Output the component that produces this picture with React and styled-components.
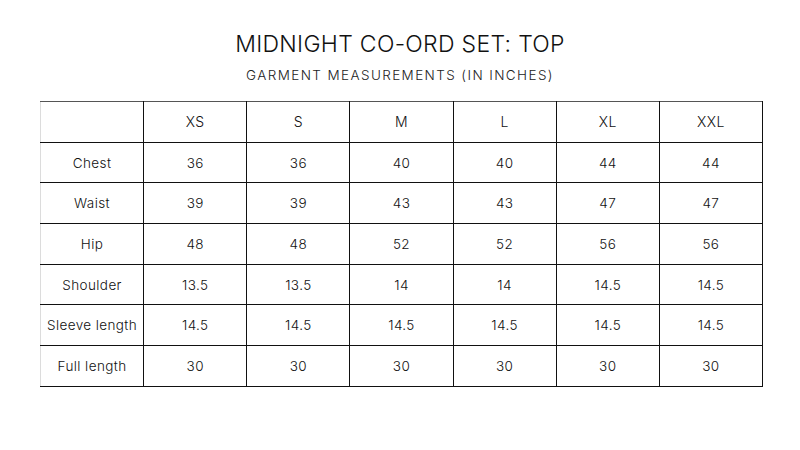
import React from 'react'
import styled, { createGlobalStyle } from 'styled-components'

const GlobalStyle = createGlobalStyle`
  body {
    margin: 0;
    background: #ffffff;
    font-family: Inter, "Liberation Sans", sans-serif;
    color: #111;
  }
`;

const Page = styled.div`
  width: 800px;
  height: 450px;
  padding-top: 30px;
  box-sizing: border-box;
`;

const Title = styled.h1`
  margin: 0;
  text-align: center;
  font-size: 23px;
  font-weight: 300;
  line-height: 28px;
  letter-spacing: 0.3px;
  color: #111;
`;

const Subtitle = styled.h2`
  margin: 8px 0 0;
  text-align: center;
  font-size: 13.5px;
  font-weight: 300;
  line-height: 18px;
  letter-spacing: 1.4px;
  color: #222;
`;

const Table = styled.table`
  margin: 17px 0 0 40px;
  width: 723px;
  border-collapse: collapse;
  table-layout: fixed;
`;

const Cell = styled.td`
  height: 39.7px;
  padding: 0;
  text-align: center;
  font-size: 13.5px;
  font-weight: 300;
  letter-spacing: 0.4px;
  color: #111;
  border: 1px solid #111;
  border-top-color: ${p => (p.$lightTop ? '#c8c8c8' : '#111')};
  border-left-color: ${p => (p.$edge ? '#dcdcdc' : p.$grayLeft ? '#9a9a9a' : '#111')};
`;

const HeadCell = styled(Cell)`
  font-size: 14px;
  border-top-color: #555;
`;

const sizes = ['XS', 'S', 'M', 'L', 'XL', 'XXL'];

const rows = [
  ['Chest', '36', '36', '40', '40', '44', '44'],
  ['Waist', '39', '39', '43', '43', '47', '47'],
  ['Hip', '48', '48', '52', '52', '56', '56'],
  ['Shoulder', '13.5', '13.5', '14', '14', '14.5', '14.5'],
  ['Sleeve length', '14.5', '14.5', '14.5', '14.5', '14.5', '14.5'],
  ['Full length', '30', '30', '30', '30', '30', '30'],
];

const App = () => {
  return (
    <Page>
      <GlobalStyle />
      <Title>MIDNIGHT CO-ORD SET: TOP</Title>
      <Subtitle>GARMENT MEASUREMENTS (IN INCHES)</Subtitle>
      <Table>
        <tbody>
          <tr>
            <HeadCell $edge />
            {sizes.map((s, i) => (
              <HeadCell key={s} $grayLeft={i === 4}>{s}</HeadCell>
            ))}
          </tr>
          {rows.map((r, ri) => (
            <tr key={r[0]}>
              {r.map((v, ci) => (
                <Cell key={ci} $edge={ci === 0} $grayLeft={ci === 5} $lightTop={ri === 5}>
                  {v}
                </Cell>
              ))}
            </tr>
          ))}
        </tbody>
      </Table>
    </Page>
  );
};

export default App;
